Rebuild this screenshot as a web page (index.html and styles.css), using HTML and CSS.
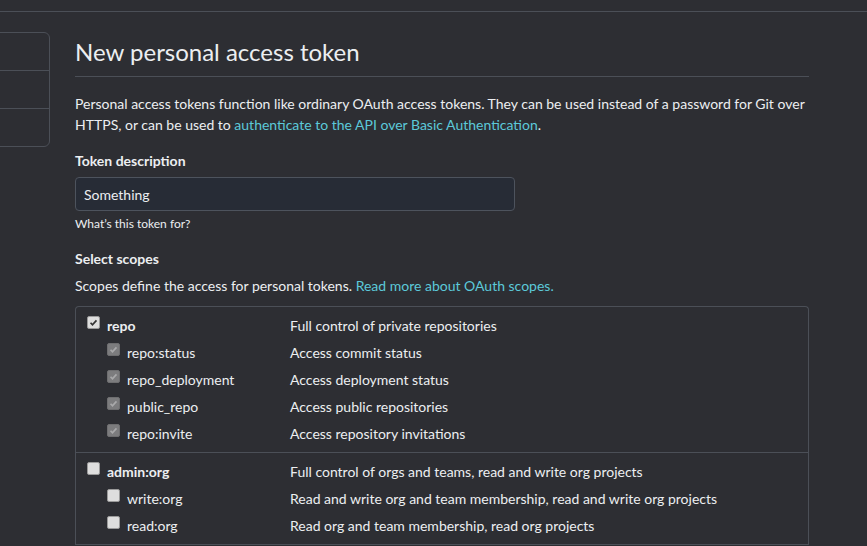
FILE: index.html
```html
<!DOCTYPE html>
<html lang="en">
<head>
<meta charset="utf-8">
<title>New personal access token</title>
<link rel="stylesheet" href="styles.css">
</head>
<body>
<div class="topbar"></div>
<div class="layout">
  <nav class="sidebar">
    <div class="side-item"></div>
    <div class="side-item"></div>
    <div class="side-item"></div>
  </nav>
  <main class="content">
    <h1 class="title">New personal access token</h1>
    <p class="intro">Personal access tokens function like ordinary OAuth access tokens. They can be used instead of a password for Git over HTTPS, or can be used to <a href="#" class="link">authenticate to the API over Basic Authentication</a>.</p>
    <label class="field-label" for="desc">Token description</label>
    <input id="desc" class="text-input" type="text" value="Something">
    <p class="note">What’s this token for?</p>
    <h3 class="field-label scopes-title">Select scopes</h3>
    <p class="scopes-intro">Scopes define the access for personal tokens. <a href="#" class="link">Read more about OAuth scopes.</a></p>
    <div class="scopes">
      <div class="group">
        <div class="row">
          <div class="name main"><span class="cb checked"><svg viewBox="0 0 13 13"><path d="M3 6.8l2.3 2.4L10 4" /></svg></span><span class="label strong">repo</span></div>
          <div class="desc">Full control of private repositories</div>
        </div>
        <div class="row">
          <div class="name sub"><span class="cb checked disabled"><svg viewBox="0 0 13 13"><path d="M3 6.8l2.3 2.4L10 4" /></svg></span><span class="label">repo:status</span></div>
          <div class="desc">Access commit status</div>
        </div>
        <div class="row">
          <div class="name sub"><span class="cb checked disabled"><svg viewBox="0 0 13 13"><path d="M3 6.8l2.3 2.4L10 4" /></svg></span><span class="label">repo_deployment</span></div>
          <div class="desc">Access deployment status</div>
        </div>
        <div class="row">
          <div class="name sub"><span class="cb checked disabled"><svg viewBox="0 0 13 13"><path d="M3 6.8l2.3 2.4L10 4" /></svg></span><span class="label">public_repo</span></div>
          <div class="desc">Access public repositories</div>
        </div>
        <div class="row">
          <div class="name sub"><span class="cb checked disabled"><svg viewBox="0 0 13 13"><path d="M3 6.8l2.3 2.4L10 4" /></svg></span><span class="label">repo:invite</span></div>
          <div class="desc">Access repository invitations</div>
        </div>
      </div>
      <div class="group">
        <div class="row">
          <div class="name main"><span class="cb"></span><span class="label strong">admin:org</span></div>
          <div class="desc">Full control of orgs and teams, read and write org projects</div>
        </div>
        <div class="row">
          <div class="name sub"><span class="cb"></span><span class="label">write:org</span></div>
          <div class="desc">Read and write org and team membership, read and write org projects</div>
        </div>
        <div class="row">
          <div class="name sub"><span class="cb"></span><span class="label">read:org</span></div>
          <div class="desc">Read org and team membership, read org projects</div>
        </div>
      </div>
    </div>
  </main>
</div>
</body>
</html>
```
FILE: styles.css
```css
* { box-sizing: border-box; }
html, body {
  margin: 0;
  padding: 0;
  background: #2d2e33;
  color: #eceef1;
  font-family: Lato, "Noto Sans", sans-serif;
  font-size: 14px;
  line-height: 21px;
  overflow: hidden;
}
.topbar {
  height: 12px;
  border-bottom: 1px solid #4b4f57;
}
.layout {
  display: flex;
  gap: 25px;
  margin-top: 20px;
}
.sidebar {
  flex: 0 0 200px;
  margin-left: -150px;
  border: 1px solid #4b4f57;
  border-radius: 0 6px 6px 0;
  align-self: flex-start;
}
.side-item {
  height: 38px;
  border-top: 1px solid #4b4f57;
}
.side-item:first-child { border-top: 0; height: 37px; }
.content {
  flex: 0 0 734px;
}
.title {
  margin: 0;
  font-size: 24px;
  font-weight: 400;
  line-height: 40px;
  padding-bottom: 4px;
  border-bottom: 1px solid #4b4f57;
}
.intro {
  margin: 16px 0 0;
}
.link {
  color: #5cc9d9;
  text-decoration: none;
}
.field-label {
  display: block;
  margin: 15px 0 0;
  font-size: 14px;
  font-weight: 700;
  line-height: 21px;
}
.text-input {
  display: block;
  margin-top: 6px;
  width: 440px;
  height: 34px;
  padding: 0 8px;
  background: #272c36;
  border: 1px solid #4d535d;
  border-radius: 4px;
  color: #eceef1;
  font-family: inherit;
  font-size: 14px;
  outline: none;
}
.note {
  margin: 4px 0 0;
  font-size: 12px;
  line-height: 18px;
}
.scopes-intro {
  margin: 6px 0 0;
}
.scopes {
  margin-top: 10px;
  border: 1px solid #4b4f57;
  border-bottom: 0;
  border-radius: 4px 4px 0 0;
}
.group {
  padding: 5px 0;
  border-bottom: 1px solid #4b4f57;
}
.row {
  display: flex;
  height: 27px;
  align-items: center;
}
.name {
  display: flex;
  align-items: center;
  width: 214px;
  padding-left: 11px;
}
.name.sub { padding-left: 31px; }
.label { margin-left: 7px; }
.strong { font-weight: 700; }
.cb {
  flex: 0 0 13px;
  width: 13px;
  height: 13px;
  border: 1px solid #9a9a9a;
  border-radius: 2px;
  background: #dedede;
  display: flex;
  margin-top: -6px;
}
.cb svg {
  width: 11px;
  height: 11px;
  fill: none;
  stroke: #333;
  stroke-width: 2;
}
.cb.disabled {
  background: #7c7c7e;
  border-color: #6e6e70;
}
.cb.disabled svg { stroke: #a9a9ab; }
.desc {
  flex: 1;
}
```
